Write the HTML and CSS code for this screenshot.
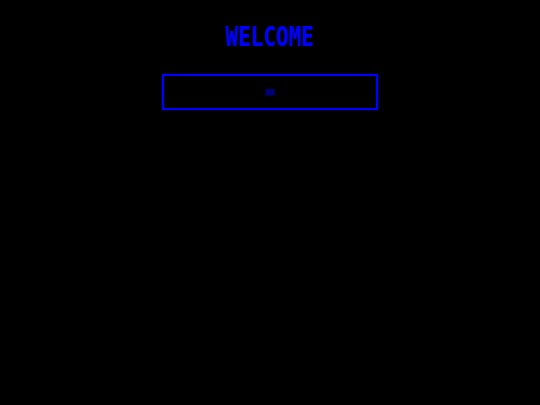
FILE: index.html
```html
<!DOCTYPE html>
<html>
<head>
<meta charset="utf-8">
<link rel="stylesheet" href="styles.css">
</head>
<body>
<main class="screen">
  <h1 class="title">WELCOME</h1>
  <div class="field"><span class="placeholder">■</span></div>
</main>
</body>
</html>
```
FILE: styles.css
```css
html, body { margin: 0; padding: 0; background: #000; }
.screen { width: 540px; height: 405px; display: flex; flex-direction: column; align-items: center; padding-top: 22px; box-sizing: border-box; }
.title { margin: 0; color: #0000ff; font-family: "DejaVu Sans Mono", monospace; font-weight: bold; font-size: 21px; line-height: 30px; transform: scaleY(1.3); }
.field { margin-top: 22px; width: 216px; height: 36px; box-sizing: border-box; border: 2px solid #0000ff; box-shadow: 0 0 1px #0000ff; display: flex; align-items: center; justify-content: center; padding-bottom: 2px; }
.placeholder { font-family: "DejaVu Sans Mono", monospace; font-size: 11px; line-height: 11px; color: #000078; transform: scaleX(1.4); }
```
